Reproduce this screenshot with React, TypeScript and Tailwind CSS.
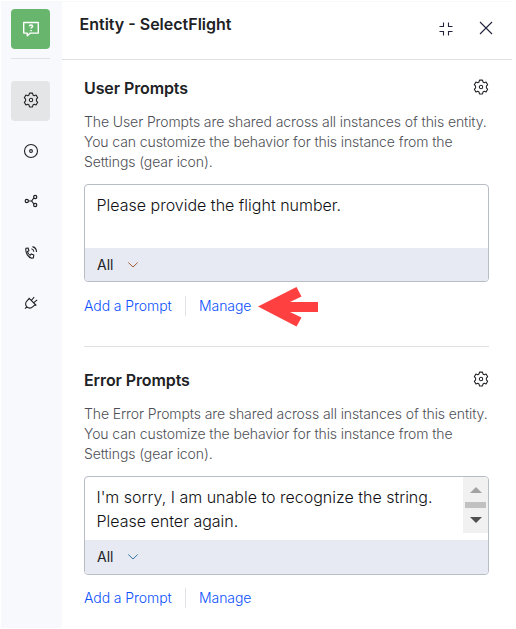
import React from "react";

type IconProps = { className?: string };

function Gear({ className }: IconProps) {
  return (
    <svg viewBox="0 0 16 16" className={className} fill="none" stroke="currentColor" strokeWidth="1.05" strokeLinejoin="round">
      <path d="M6.5 1.1h3l.5 1.9 1.2.7 1.9-.6 1.6 2.6-1.3 1.5v1.6l1.3 1.5-1.6 2.6-1.9-.6-1.2.7-.5 1.9h-3L6 13l-1.2-.7-1.9.6-1.6-2.6 1.3-1.5V7.2L1.3 5.7l1.6-2.6 1.9.6L6 3z" />
      <circle cx="8" cy="8" r="1.7" />
    </svg>
  );
}

function ChatQuestion() {
  return (
    <svg viewBox="0 0 18 18" className="h-[18px] w-[18px]" fill="none" stroke="white" strokeWidth="1.4" strokeLinejoin="round">
      <path d="M1.7 2.5h14.6v10.6H8.3L5.3 15.8v-2.7H1.7z" />
      <path d="M7.4 6.2c0-1.7 3.2-1.7 3.2 0 0 1.2-1.6 1.1-1.6 2.3M9 9.9v1.3" strokeWidth="1.5" />
    </svg>
  );
}

function Disc() {
  return (
    <svg viewBox="0 0 16 16" className="h-4 w-4" fill="none" stroke="currentColor" strokeWidth="1.1">
      <circle cx="8" cy="8" r="6.5" />
      <circle cx="8" cy="8" r="1.4" />
    </svg>
  );
}

function Branch() {
  return (
    <svg viewBox="0 0 16 16" className="h-4 w-4" fill="none" stroke="currentColor" strokeWidth="1.2">
      <circle cx="3.8" cy="8" r="1.6" />
      <circle cx="12.2" cy="4" r="1.6" />
      <circle cx="12.2" cy="12" r="1.6" />
      <path d="M5.4 8h3.2M10.900 5 8.600 8l2.300 3" />
    </svg>
  );
}

function PhoneCall() {
  return (
    <svg viewBox="0 0 16 16" className="h-4 w-4" fill="none" stroke="currentColor" strokeWidth="1.1" strokeLinejoin="round">
      <path d="M2.9 4.3 5.1 4l.9 2.8-1.6.8c.5 1.7 1.5 3 2.9 3.7l1-1.4 2.5 1.1-.4 2.900-1.600.3C5 13.300 2.200 8.800 2.900 4.300z" />
      <path d="M8.4 4.800c1.500.3 2.300 1.300 2.400 3M9.500 2.600c2.500.6 4 2.600 4 5.400" />
    </svg>
  );
}

function Plug() {
  return (
    <svg viewBox="0 0 16 16" className="h-4 w-4" fill="none" stroke="currentColor" strokeWidth="1.1" strokeLinejoin="round">
      <path d="M5.700 2.900 13.300 10.500M6.300 3.500 4 5.800c-1.900 1.900-1.800 4.300-.1 6s4.100 1.800 6-.1l2.500-2.300M3.900 11.800 2 13.700M8.300 5.500l2.900-3.300M10.600 7.800l3.500-3" />
    </svg>
  );
}

function Collapse() {
  return (
    <svg viewBox="0 0 14 14" className="h-[14px] w-[14px]" fill="none" stroke="currentColor" strokeWidth="1.1">
      <path d="M.5 4.500h4v-4M9.500.5v4h4M.5 9.500h4v4M13.500 9.500h-4v4" />
    </svg>
  );
}

function Chevron({ className }: IconProps) {
  return (
    <svg viewBox="0 0 10 6" className={className} fill="none" stroke="currentColor" strokeWidth="1">
      <path d="m.3.5 4.700 4.500L9.700.5" />
    </svg>
  );
}

function Scrollbar() {
  return (
    <div className="flex h-14 w-[25px] shrink-0 flex-col items-center bg-[#f1f1f1]">
      <svg viewBox="0 0 12 6" className="mt-[10px] h-[6px] w-3 fill-[#a3a3a3]"><path d="M0 6 6 0l6 6z" /></svg>
      <div className="mt-[9px] h-[6px] w-[21px] bg-[#c1c1c1]" />
      <svg viewBox="0 0 12 6" className="mt-[9px] h-[6px] w-3 fill-[#505050]"><path d="M0 0h12L6 6z" /></svg>
    </div>
  );
}

type PromptProps = {
  kind: "User" | "Error";
  lines: string[];
  tall?: boolean;
  pointer?: boolean;
};

function PromptSection({ kind, lines, tall, pointer }: PromptProps) {
  return (
    <section className="w-[405px]">
      <div className="flex h-6 justify-between">
        <h2 className="text-[16px] leading-6 font-semibold tracking-[-0.1px] text-[#202124]">{kind} Prompts</h2>
        <Gear className="mt-[3px] h-4 w-4 text-[#202124]" />
      </div>
      <p className="mt-3 text-[14px] leading-5 font-light tracking-[-0.1px] whitespace-nowrap text-[#4e4f56]">
        The {kind} Prompts are shared across all instances of this entity.<br />
        You can customize the behavior for this instance from the<br />
        Settings (gear icon).
      </p>
      <div className={`mt-3 flex flex-col overflow-hidden rounded-[4px] border border-[#b8bcc4] ${tall ? "h-[99px]" : "h-[98px]"}`}>
        <div className="flex h-[63px] justify-between">
          <div className="pt-2 pl-[11.5px] text-[16px] leading-6 font-light whitespace-nowrap text-[#101114]">
            {lines.map((line) => <div key={line}>{line}</div>)}
          </div>
          {tall && <Scrollbar />}
        </div>
        <div className="flex flex-1 items-center bg-[#e7eaf3] pl-3 text-[14px] leading-5 text-[#202124]">
          <span className="w-[15px]">All</span>
          <Chevron className={`ml-4 h-[6px] w-[10px] ${tall ? "text-[#32759f]" : "text-[#a45c36]"}`} />
        </div>
      </div>
      <div className={`flex h-5 items-center text-[14px] leading-5 font-light tracking-[-0.07px] whitespace-nowrap text-[#0a50ff] ${tall ? "mt-[13px]" : "mt-[14px]"}`}>
        <a className="w-[88px]">Add a Prompt</a>
        <span className="mr-[13.5px] ml-[12.5px] h-5 w-px bg-[#dfe2e7]" />
        <a className="w-[52px]">Manage</a>
        {pointer && (
          <svg viewBox="0 0 60 42" className="-my-3 ml-[6.5px] h-[42px] w-[60px] fill-[#ff4040]">
            <path d="M0 21.500 38.500 2 43.500 11.500 32 17h28v10H32L43.500 32.500l-5 9z" />
          </svg>
        )}
      </div>
    </section>
  );
}

export default function App() {
  return (
    <div className="h-[629px] w-[516px] bg-white pt-px pl-px font-['Inter',sans-serif]">
      <div className="flex h-[627px] w-[511px] border-t border-[#f7f8f9]">
        <aside className="flex w-[61px] shrink-0 flex-col items-center bg-[#f7f9fc] pt-[7px] pr-[2px] text-[#202124]">
          <div className="flex h-10 w-[39px] items-center justify-center rounded-[4px] bg-[#68b66e]"><ChatQuestion /></div>
          <div className="mt-[9px] h-px w-[39px] bg-[#dfe1e4]" />
          <div className="mt-[22px] flex h-10 w-[39px] items-center justify-center rounded-[4px] bg-[#e4e5e7]"><Gear className="-mt-0.5 h-4 w-4" /></div>
          <div className="mt-[22px] flex flex-col">
            <Disc />
            <div className="mt-[34px]"><Branch /></div>
            <div className="mt-[35px]"><PhoneCall /></div>
            <div className="mt-[35px]"><Plug /></div>
          </div>
        </aside>
        <main className="min-w-0 flex-1">
          <header className="flex h-[58px] justify-between border-b border-[#dddfe2] pt-[10px] pr-[19px] pl-[17.5px]">
            <h1 className="text-[16px] leading-6 font-semibold text-[#202124]">Entity - SelectFlight</h1>
            <div className="flex h-8 items-center gap-[26px] pt-px text-[#20233b]">
              <Collapse />
              <svg viewBox="0 0 14 14" className="-mt-px h-[14px] w-[14px]" fill="none" stroke="currentColor" strokeWidth="1.1"><path d="m1 1 12 12M13 1 1 13" /></svg>
            </div>
          </header>
          <div className="pt-4 pl-[22px]">
            <PromptSection kind="User" lines={["Please provide the flight number."]} pointer />
            <div className="mt-[30px] mb-[21px] h-px w-[405px] bg-[#e0e2e5]" />
            <PromptSection kind="Error" lines={["I'm sorry, I am unable to recognize the string.", "Please enter again."]} tall />
          </div>
        </main>
      </div>
    </div>
  );
}
